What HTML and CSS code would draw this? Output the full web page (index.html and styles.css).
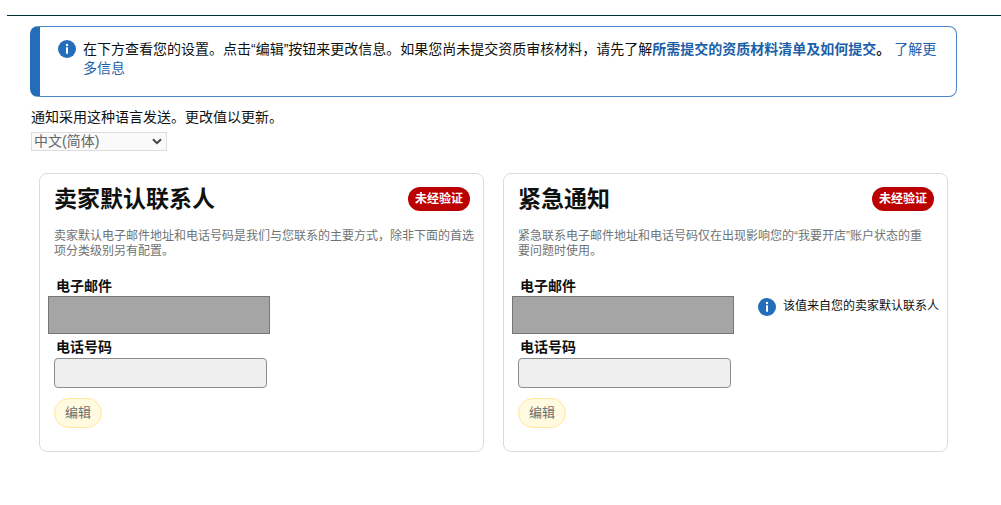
FILE: index.html
```html
<!DOCTYPE html>
<html lang="zh-CN">
<head>
<meta charset="utf-8">
<title>通知首选项</title>
<link rel="stylesheet" href="styles.css">
</head>
<body>
<hr class="divider">
<main class="page">
  <section class="notice">
    <svg class="info-icon" viewBox="0 0 18 18" aria-hidden="true"><circle cx="9" cy="9" r="9" fill="#246eb9"/><circle cx="9" cy="5" r="1.2" fill="#fff"/><rect x="8" y="7.3" width="2" height="6.4" fill="#fff"/></svg>
    <p class="notice-text">在下方查看您的设置。点击“编辑”按钮来更改信息。如果您尚未提交资质审核材料，请先了解<a class="link strong" href="#">所需提交的资质材料清单及如何提交</a><span class="strong">。</span> <a class="link" href="#">了解更多信息</a></p>
  </section>

  <div class="language">
    <label class="language-label" for="language">通知采用这种语言发送。更改值以更新。</label>
    <div class="select-wrap">
      <select class="select" id="language"><option>中文(简体)</option></select>
      <svg class="chevron" viewBox="0 0 10 7" aria-hidden="true"><path d="M1 1.2l4 4 4-4" fill="none" stroke="#444" stroke-width="2"/></svg>
    </div>
  </div>

  <div class="cards">
    <section class="card">
      <header class="card-head"><h2 class="title">卖家默认联系人</h2><span class="badge">未经验证</span></header>
      <p class="hint">卖家默认电子邮件地址和电话号码是我们与您联系的主要方式，除非下面的首选项分类级别另有配置。</p>
      <label class="label" for="email1">电子邮件</label>
      <div class="row"><input class="masked" id="email1" type="email" readonly></div>
      <label class="label phone-label" for="phone1">电话号码</label>
      <input class="input" id="phone1" type="tel" disabled>
      <button class="edit" type="button">编辑</button>
    </section>

    <section class="card">
      <header class="card-head"><h2 class="title">紧急通知</h2><span class="badge">未经验证</span></header>
      <p class="hint hint-narrow">紧急联系电子邮件地址和电话号码仅在出现影响您的“我要开店”账户状态的重要问题时使用。</p>
      <label class="label" for="email2">电子邮件</label>
      <div class="row">
        <input class="masked" id="email2" type="email" readonly>
        <div class="note">
          <svg class="info-icon" viewBox="0 0 18 18" aria-hidden="true"><circle cx="9" cy="9" r="9" fill="#246eb9"/><circle cx="9" cy="5" r="1.2" fill="#fff"/><rect x="8" y="7.3" width="2" height="6.4" fill="#fff"/></svg>
          <span>该值来自您的卖家默认联系人</span>
        </div>
      </div>
      <label class="label phone-label" for="phone2">电话号码</label>
      <input class="input" id="phone2" type="tel" disabled>
      <button class="edit" type="button">编辑</button>
    </section>
  </div>
</main>
</body>
</html>
```

FILE: styles.css
```css
* {
  box-sizing: border-box;
}

body {
  margin: 0;
  background: #fff;
  color: #0f1111;
  font: 14px/19px "Liberation Sans", "Noto Sans CJK SC", sans-serif;
}

input,
select,
button {
  font-family: inherit;
}

.divider {
  margin: 15px 0 0 7px;
  border: 0;
  border-top: 1px solid #002f36;
}

.page {
  padding: 10px 44px 24px 30px;
}

.notice {
  display: flex;
  gap: 7px;
  padding: 13px 16px 18px 18px;
  border: 1px solid #4a86c5;
  border-left: 10px solid #246eb9;
  border-radius: 8px;
}

.info-icon {
  flex: none;
  width: 18px;
  height: 18px;
}

.notice-text {
  margin: 0;
}

.link {
  color: #1d5fa8;
  text-decoration: none;
}

.strong {
  font-weight: 700;
}

.language {
  padding: 11px 1px 0;
}

.language-label {
  display: block;
}

.select-wrap {
  position: relative;
  width: 136px;
  margin-top: 5px;
}

.select {
  display: block;
  width: 100%;
  height: 19px;
  padding: 0 2px;
  border: 1px solid #ddd;
  border-radius: 0;
  appearance: none;
  background: #fafafa;
  color: #666;
  font-size: 14px;
  line-height: 17px;
}

.chevron {
  position: absolute;
  top: 6px;
  right: 5px;
  width: 10px;
  height: 7px;
  pointer-events: none;
}

.cards {
  display: grid;
  grid-template-columns: 1fr 1fr;
  gap: 19px;
  margin-top: 22px;
  padding: 0 9px;
}

.card {
  padding: 10px 8px 23px 14px;
  border: 1px solid #d9dcdc;
  border-radius: 8px;
}

.card-head {
  display: flex;
  align-items: center;
  justify-content: space-between;
  padding-right: 5px;
}

.title {
  margin: 0;
  font-size: 23px;
  line-height: 30px;
}

.badge {
  padding: 0 7px;
  border-radius: 12px;
  background: #ba0000;
  color: #fff;
  font-size: 12px;
  font-weight: 700;
  line-height: 24px;
}

.hint {
  margin: 15px 0 18px;
  color: #707373;
  font-size: 12px;
  line-height: 15px;
}

.hint-narrow {
  padding-right: 12px;
}

.label {
  display: block;
  padding-left: 2px;
  font-weight: 700;
}

.phone-label {
  margin: 4px 0 1px;
}

.row {
  display: flex;
  gap: 24px;
  margin-left: -6px;
}

.masked {
  flex: none;
  width: 222px;
  height: 38px;
  border: 1px solid #777;
  background: #a5a5a5;
}

.note {
  display: flex;
  gap: 7px;
  padding-top: 2px;
  font-size: 12px;
  line-height: 16px;
  white-space: nowrap;
}

.input {
  display: block;
  width: 213px;
  height: 30px;
  border: 1px solid #8b8e8e;
  border-radius: 4px;
  background: #efefef;
}

.edit {
  display: block;
  height: 30px;
  margin-top: 10px;
  padding: 0 10px 3px;
  border: 1px solid #ffe999;
  border-radius: 15px;
  background: #fffae0;
  color: #6c6e6e;
  font-size: 13px;
}
```
